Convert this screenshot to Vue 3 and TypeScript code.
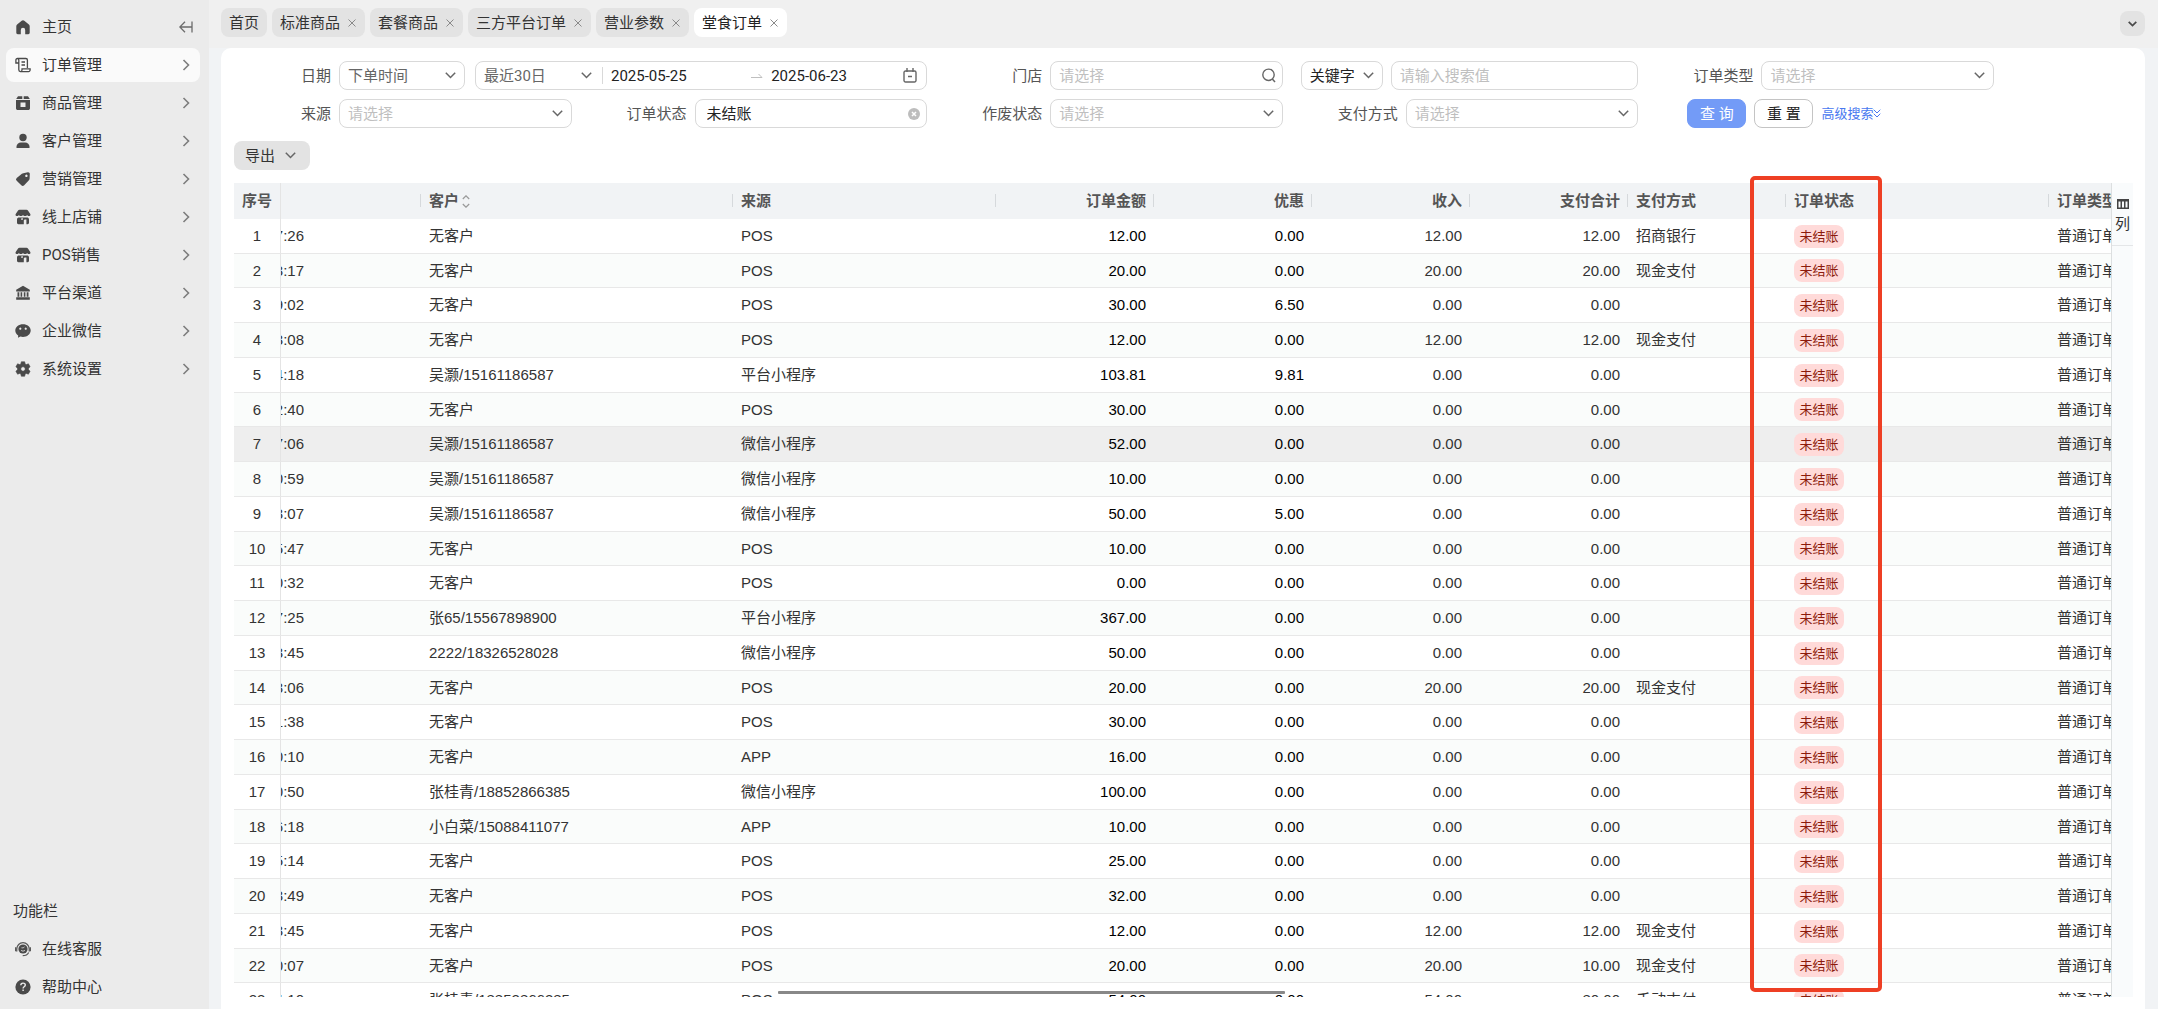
<script setup lang="ts">
import { ref } from 'vue'

interface MenuEntry {
  label: string
  icon: string
}

interface Order {
  no: number
  time: string
  customer: string
  source: string
  amount: string
  discount: string
  income: string
  paid: string
  method: string
}

const menu: MenuEntry[] = [
  { label: '订单管理', icon: 'order' },
  { label: '商品管理', icon: 'goods' },
  { label: '客户管理', icon: 'user' },
  { label: '营销管理', icon: 'tag' },
  { label: '线上店铺', icon: 'shop' },
  { label: 'POS销售', icon: 'shop' },
  { label: '平台渠道', icon: 'bank' },
  { label: '企业微信', icon: 'chat' },
  { label: '系统设置', icon: 'gear' },
]
const activeMenu = ref('订单管理')

const tabs = ref(['首页', '标准商品', '套餐商品', '三方平台订单', '营业参数', '堂食订单'])
const activeTab = ref('堂食订单')

const startDate = ref('2025-05-25')
const endDate = ref('2025-06-23')
const orderStatus = ref('未结账')
const keyword = ref('')

const none = '无客户'
const wu = '吴灏/15161186587'
const raw: string[][] = [
  ['7:26', none, 'POS', '12.00', '0.00', '12.00', '12.00', '招商银行'],
  ['3:17', none, 'POS', '20.00', '0.00', '20.00', '20.00', '现金支付'],
  ['9:02', none, 'POS', '30.00', '6.50', '0.00', '0.00', ''],
  ['3:08', none, 'POS', '12.00', '0.00', '12.00', '12.00', '现金支付'],
  ['4:18', wu, '平台小程序', '103.81', '9.81', '0.00', '0.00', ''],
  ['2:40', none, 'POS', '30.00', '0.00', '0.00', '0.00', ''],
  ['7:06', wu, '微信小程序', '52.00', '0.00', '0.00', '0.00', ''],
  ['0:59', wu, '微信小程序', '10.00', '0.00', '0.00', '0.00', ''],
  ['3:07', wu, '微信小程序', '50.00', '5.00', '0.00', '0.00', ''],
  ['5:47', none, 'POS', '10.00', '0.00', '0.00', '0.00', ''],
  ['0:32', none, 'POS', '0.00', '0.00', '0.00', '0.00', ''],
  ['7:25', '张65/15567898900', '平台小程序', '367.00', '0.00', '0.00', '0.00', ''],
  ['3:45', '2222/18326528028', '微信小程序', '50.00', '0.00', '0.00', '0.00', ''],
  ['3:06', none, 'POS', '20.00', '0.00', '20.00', '20.00', '现金支付'],
  ['1:38', none, 'POS', '30.00', '0.00', '0.00', '0.00', ''],
  ['0:10', none, 'APP', '16.00', '0.00', '0.00', '0.00', ''],
  ['0:50', '张桂青/18852866385', '微信小程序', '100.00', '0.00', '0.00', '0.00', ''],
  ['6:18', '小白菜/15088411077', 'APP', '10.00', '0.00', '0.00', '0.00', ''],
  ['5:14', none, 'POS', '25.00', '0.00', '0.00', '0.00', ''],
  ['3:49', none, 'POS', '32.00', '0.00', '0.00', '0.00', ''],
  ['3:45', none, 'POS', '12.00', '0.00', '12.00', '12.00', '现金支付'],
  ['0:07', none, 'POS', '20.00', '0.00', '20.00', '10.00', '现金支付'],
  ['4:10', '张桂青/18852866385', 'POS', '54.00', '0.00', '54.00', '80.00', '手动支付'],
]
const orders: Order[] = raw.map((r, i) => ({
  no: i + 1,
  time: r[0],
  customer: r[1],
  source: r[2],
  amount: r[3],
  discount: r[4],
  income: r[5],
  paid: r[6],
  method: r[7],
}))
const hoveredNo = 7

function closeTab(name: string): void {
  tabs.value = tabs.value.filter((t) => t !== name)
}
</script>

<template>
  <div class="app">
    <aside class="sidebar">
      <nav class="menu">
        <div class="item">
          <svg class="ico" viewBox="0 0 16 16"><path d="M8 1.200c.5 0 .9.200 1.300.5l4.600 3.800c.5.400.8 1 .8 1.700v6.600c0 .8-.6 1.400-1.400 1.400H10.200v-4.200a2.200 2.200 0 0 0-4.400 0v4.200H2.700c-.8 0-1.400-.6-1.400-1.400V7.200c0-.7.3-1.300.8-1.700l4.600-3.800c.4-.3.8-.5 1.300-.5z" fill="#4a4a4a" /></svg>
          <a href="#" class="name">主页</a>
          <button class="fold" type="button" aria-label="收起菜单">
            <svg width="14" height="12" viewBox="0 0 14 12"><path d="M13 0.500v11M12.500 6H1M6 0.800L.8 6 6 11.200" fill="none" stroke="#6b6b6b" stroke-width="1.300" /></svg>
          </button>
        </div>
        <a v-for="m in menu" :key="m.label" href="#" class="item" :class="{ active: m.label === activeMenu }" @click.prevent="activeMenu = m.label">
          <svg v-if="m.icon === 'order'" class="ico" viewBox="0 0 16 16"><path d="M3.500 6H.9V3.200a1.600 1.600 0 0 1 1.600-1.700h8.400a1.500 1.500 0 0 1 1.500 1.500v8M2.500 1.500c.8 0 1.300.7 1.300 1.700v9.600c0 1 .7 1.800 1.600 1.800h8.200a1.500 1.500 0 0 0 1.500-1.500v-1.300H7v1.300c0 1-.7 1.500-1.500 1.500M6.500 5h3.500M6.500 8h3.500" fill="none" stroke="#4a4a4a" stroke-width="1.300" /></svg>
          <svg v-else-if="m.icon === 'goods'" class="ico" viewBox="0 0 16 16"><path d="M3 1.200h4.300V4H1.200zM8.700 1.200H13L14.800 4H8.700z" fill="#4a4a4a" /><path fill-rule="evenodd" d="M1 5h14v8.200c0 1-.8 1.800-1.800 1.800H2.800c-1 0-1.800-.8-1.800-1.800zM5.500 7.500v4.500h5V7.500z" fill="#4a4a4a" /></svg>
          <svg v-else-if="m.icon === 'user'" class="ico" viewBox="0 0 16 16"><circle cx="8" cy="4.500" r="3.700" fill="#4a4a4a" /><path d="M1.500 15v-1.200c0-2.400 2-4.200 4.400-4.200h4.200c2.400 0 4.400 1.800 4.400 4.200V15z" fill="#4a4a4a" /></svg>
          <svg v-else-if="m.icon === 'tag'" class="ico" viewBox="0 0 16 16"><path fill-rule="evenodd" d="M8.300 2.200l4.600-.9c1-.2 1.900.6 1.900 1.500l-.2 5c0 .6-.3 1.100-.7 1.500l-4.700 4.900a2 2 0 0 1-2.900 0L1.700 9.800a2 2 0 0 1 0-2.900l5.200-4.200c.4-.3.9-.4 1.400-.5zM11.400 3.600a1.200 1.200 0 1 0 .01 0z" fill="#4a4a4a" /></svg>
          <svg v-else-if="m.icon === 'shop'" class="ico" viewBox="0 0 16 16"><path d="M4.500.8h7c.7 0 1.200.3 1.600.9l2.200 3.200c.3.5.3 1.800-.9 2.100-1 .3-1.900-.3-2.200-1-.4.7-1.200 1.100-2.100 1.100S8.400 6.700 8 6c-.4.700-1.200 1.100-2.100 1.100S4.200 6.700 3.800 6c-.3.700-1.200 1.300-2.200 1C.4 6.700.4 5.400.7 4.900l2.200-3.200c.4-.6.9-.9 1.600-.9z" fill="#4a4a4a" /><path fill-rule="evenodd" d="M2 10.500C2 9.100 3 8.500 4.100 8.500h7.800c1.100 0 2.100.6 2.100 2v3.300c0 .8-.6 1.400-1.400 1.400H3.400c-.8 0-1.400-.6-1.400-1.400zM9.600 10.500h1.800v4.700H8.800v-3.900zM6.700 9L6 10.700h2L7.500 9z" fill="#4a4a4a" /></svg>
          <svg v-else-if="m.icon === 'bank'" class="ico" viewBox="0 0 16 16"><path d="M8 .8l6.800 4v1.700H1.200V4.800zM2.500 7.200h1.800v4.600H2.500zM5.600 7.200h1.600v4.600H5.600zM8.800 7.200h1.600v4.600H8.800zM11.700 7.200h1.800v4.600h-1.800zM1.200 12.300h13.600v2.500H1.200z" fill="#4a4a4a" /></svg>
          <svg v-else-if="m.icon === 'chat'" class="ico" viewBox="0 0 16 16"><path fill-rule="evenodd" d="M8 1.200c4.200 0 7.700 2.700 7.700 6.300S12.200 14 8 14c-.9 0-1.800-.1-2.600-.4L3 14.800l.2-2.300C1.400 11.300.3 9.500.3 7.500.3 3.900 3.800 1.200 8 1.200zM5.300 4.600a1.100 1.100 0 1 0 .01 0zM10.700 4.600a1.100 1.100 0 1 0 .01 0z" fill="#4a4a4a" /></svg>
          <svg v-else class="ico" viewBox="0 0 16 16"><path fill-rule="evenodd" d="M6.300.8h3.400l.4 2.100 1.300.7 2-.8 1.700 3-1.600 1.400v1.600l1.600 1.400-1.700 3-2-.8-1.300.7-.4 2.100H6.300l-.4-2.100-1.300-.7-2 .8-1.700-3 1.600-1.400V7.200L.9 5.800l1.700-3 2 .8 1.300-.7zM8 5.800a2.200 2.200 0 1 0 .01 0z" fill="#4a4a4a" stroke="#4a4a4a" stroke-width=".6" stroke-linejoin="round" /></svg>
          <span class="name">{{ m.label }}</span>
          <svg class="arrow" width="8" height="12" viewBox="0 0 8 12"><path d="M1.500 1l5 5-5 5" fill="none" stroke="#7d7d7d" stroke-width="1.600" /></svg>
        </a>
      </nav>
      <div class="tools">
        <div class="tools-title">功能栏</div>
        <a href="#" class="item">
          <svg class="ico" viewBox="0 0 16 16"><path d="M1.800 10.500V8a6.200 6.400 0 0 1 12.400 0v2.500" fill="none" stroke="#5a5a5a" stroke-width="1.200" /><path d="M0 6.200h1.600v4H0zM14.400 6.200H16v4h-1.600z" fill="#5a5a5a" /><circle cx="8" cy="8" r="4.600" fill="#4a4a4a" /><path d="M6 9.200c1 1.200 3 1.200 4 0M6.500 6.800c1.200.2 2.300-.1 3-.9" fill="none" stroke="#ebebeb" stroke-width=".8" /><path d="M13.700 11.500c-1 2-2.900 3.200-6 3.200" fill="none" stroke="#5a5a5a" stroke-width="1.200" /></svg>
          <span class="name">在线客服</span>
        </a>
        <a href="#" class="item">
          <svg class="ico" viewBox="0 0 16 16"><circle cx="8" cy="8" r="7.600" fill="#4a4a4a" /><path d="M5.800 6.300c0-1.300 1-2.200 2.200-2.200s2.300.8 2.300 2c0 1.700-2.200 1.700-2.200 3.300M8.100 10.600v1.500" fill="none" stroke="#ebebeb" stroke-width="1.400" /></svg>
          <span class="name">帮助中心</span>
        </a>
      </div>
    </aside>

    <div class="main">
      <header class="tabs">
        <div v-for="t in tabs" :key="t" class="tab" :class="{ on: t === activeTab }">
          <button type="button" class="tab-name" @click="activeTab = t">{{ t }}</button>
          <button v-if="t !== '首页'" type="button" class="tab-x" :aria-label="'关闭' + t" @click="closeTab(t)">
            <svg width="8" height="8" viewBox="0 0 8 8"><path d="M.5.5l7 7M7.500.5l-7 7" stroke="#8a8a8a" fill="none" /></svg>
          </button>
        </div>
        <button type="button" class="more" aria-label="更多标签">
          <svg width="9" height="6" viewBox="0 0 9 6"><path d="M.7.8l3.800 3.800L8.300.8" fill="none" stroke="#4a4a4a" stroke-width="1.700" /></svg>
        </button>
      </header>

      <main class="panel">
        <form class="filters" @submit.prevent>
          <div class="field wide">
            <label for="f-date">日期</label>
            <div class="select datekind">
              <select id="f-date"><option>下单时间</option></select>
              <svg class="chev" viewBox="0 0 11 7"><path d="M.8.8l4.700 4.700L10.200.8" /></svg>
            </div>
            <div class="range">
              <div class="select plain">
                <select aria-label="日期区间"><option>最近30日</option></select>
                <svg class="chev" viewBox="0 0 11 7"><path d="M.8.8l4.700 4.700L10.200.8" /></svg>
              </div>
              <i class="bar"></i>
              <input v-model="startDate" aria-label="开始日期" />
              <svg class="to" width="12" height="6" viewBox="0 0 12 6"><path d="M0 4.500h11L7.500 1" fill="none" stroke="#bfbfbf" /></svg>
              <input v-model="endDate" class="end" aria-label="结束日期" />
              <svg class="cal" width="14" height="15" viewBox="0 0 14 15"><path d="M2.500 3h9a1.500 1.500 0 0 1 1.500 1.500v8a1.500 1.500 0 0 1-1.500 1.500h-9A1.500 1.500 0 0 1 1 12.500v-8A1.500 1.500 0 0 1 2.500 3zM4 0v4M10 0v4M5 8.500h4" fill="none" stroke="#666" stroke-width="1.400" /></svg>
            </div>
          </div>

          <div class="field">
            <label for="f-store">门店</label>
            <div class="box">
              <input id="f-store" placeholder="请选择" />
              <svg class="search" width="14" height="15" viewBox="0 0 14 15"><circle cx="6.500" cy="6.800" r="5.700" fill="none" stroke="#666" stroke-width="1.400" /><path d="M10.300 11l2.700 3" stroke="#666" stroke-width="1.500" /></svg>
            </div>
          </div>

          <div class="field">
            <div class="select keykind">
              <select aria-label="搜索字段"><option>关键字</option></select>
              <svg class="chev" viewBox="0 0 11 7"><path d="M.8.8l4.700 4.700L10.200.8" /></svg>
            </div>
            <div class="box key">
              <input v-model="keyword" placeholder="请输入搜索值" aria-label="搜索值" />
            </div>
          </div>

          <div class="field">
            <label for="f-type">订单类型</label>
            <div class="select empty">
              <select id="f-type"><option>请选择</option></select>
              <svg class="chev" viewBox="0 0 11 7"><path d="M.8.8l4.700 4.700L10.200.8" /></svg>
            </div>
          </div>

          <div class="field">
            <label for="f-source">来源</label>
            <div class="select empty">
              <select id="f-source"><option>请选择</option></select>
              <svg class="chev" viewBox="0 0 11 7"><path d="M.8.8l4.700 4.700L10.200.8" /></svg>
            </div>
          </div>

          <div class="field">
            <label for="f-status">订单状态</label>
            <div class="box status">
              <input id="f-status" v-model="orderStatus" />
              <button type="button" class="clear" aria-label="清除" @click="orderStatus = ''">
                <svg width="12" height="12" viewBox="0 0 12 12"><circle cx="6" cy="6" r="6" fill="#bdbdbd" /><path d="M4 4l4 4M8 4L4 8" stroke="#fff" stroke-width="1.500" /></svg>
              </button>
            </div>
          </div>

          <div class="field">
            <label for="f-void">作废状态</label>
            <div class="select empty">
              <select id="f-void"><option>请选择</option></select>
              <svg class="chev" viewBox="0 0 11 7"><path d="M.8.8l4.700 4.700L10.200.8" /></svg>
            </div>
          </div>

          <div class="field">
            <label for="f-pay">支付方式</label>
            <div class="select empty">
              <select id="f-pay"><option>请选择</option></select>
              <svg class="chev" viewBox="0 0 11 7"><path d="M.8.8l4.700 4.700L10.200.8" /></svg>
            </div>
          </div>

          <div class="field actions">
            <button type="submit" class="btn primary">查 询</button>
            <button type="reset" class="btn">重 置</button>
            <a href="#" class="advanced">高级搜索<svg width="8" height="9" viewBox="0 0 8 9"><path d="M.7.700L4 4 7.300.7M.7 4.700L4 8l3.300-3.300" fill="none" stroke="#4878f0" /></svg></a>
          </div>
        </form>

        <div class="toolbar">
          <button type="button" class="export">导出
            <svg width="11" height="7" viewBox="0 0 11 7"><path d="M.8.8l4.700 4.700L10.200.8" fill="none" stroke="#666" stroke-width="1.500" /></svg>
          </button>
        </div>

        <div class="grid">
          <div class="scroller">
            <table>
              <colgroup>
                <col class="w-no" /><col class="w-time" /><col class="w-cust" /><col class="w-src" />
                <col class="w-num" /><col class="w-num" /><col class="w-num" /><col class="w-num" /><col class="w-num" />
                <col class="w-src" /><col />
              </colgroup>
              <thead>
                <tr>
                  <th class="no">序号</th>
                  <th></th>
                  <th><span class="sortable">客户<svg width="8" height="13" viewBox="0 0 8 13"><path d="M.8 4L4 .8 7.200 4M.8 9L4 12.200 7.200 9" fill="none" stroke="#999" stroke-width="1.200" /></svg></span></th>
                  <th>来源</th>
                  <th class="num">订单金额</th>
                  <th class="num">优惠</th>
                  <th class="num">收入</th>
                  <th class="num">支付合计</th>
                  <th>支付方式</th>
                  <th>订单状态</th>
                  <th>订单类型</th>
                </tr>
              </thead>
              <tbody>
                <tr v-for="o in orders" :key="o.no" :class="{ hover: o.no === hoveredNo }">
                  <td class="no">{{ o.no }}</td>
                  <td class="time"><div>{{ o.time }}</div></td>
                  <td>{{ o.customer }}</td>
                  <td>{{ o.source }}</td>
                  <td class="num dark">{{ o.amount }}</td>
                  <td class="num dark">{{ o.discount }}</td>
                  <td class="num">{{ o.income }}</td>
                  <td class="num">{{ o.paid }}</td>
                  <td>{{ o.method }}</td>
                  <td><span class="pill">未结账</span></td>
                  <td>普通订单</td>
                </tr>
              </tbody>
            </table>
            <div class="thumb"></div>
          </div>
          <div class="side">
            <button type="button" class="cols">
              <svg width="12" height="10" viewBox="0 0 12 10"><path d="M0 0h12v10H0zM1.500 2.500v6h2v-6zM5 2.500v6h2v-6zM8.500 2.500v6h2v-6z" fill="#444" fill-rule="evenodd" /></svg>
              列
            </button>
          </div>
          <div class="marker"></div>
        </div>
      </main>
    </div>
  </div>
</template>

<style>
body {
  background: #f0f0f0;
}
</style>

<style scoped>
.app {
  display: flex;
  height: 100vh;
  overflow: hidden;
  font: 15px/20px Roboto, "Noto Sans CJK SC", sans-serif;
  color: #333;
}
.app *,
.app *::after {
  box-sizing: border-box;
}
button,
input,
select {
  font: inherit;
  color: inherit;
  border: 0;
  background: none;
  padding: 0;
  margin: 0;
  outline: 0;
}
a {
  color: inherit;
  text-decoration: none;
}
svg {
  display: block;
  flex: none;
}

.sidebar {
  width: 209px;
  flex: none;
  background: #ebebeb;
  display: flex;
  flex-direction: column;
  justify-content: space-between;
  padding: 10px 9px 5px 6px;
}
.menu,
.tools {
  display: flex;
  flex-direction: column;
  gap: 4px;
}
.item {
  display: flex;
  align-items: center;
  height: 34px;
  padding: 0 10px 0 9px;
  border-radius: 8px;
}
.item.active {
  background: #fafafa;
}
.ico {
  width: 16px;
  height: 16px;
  margin-right: 11px;
}
.name {
  flex: 1;
}
.fold {
  margin-right: -3px;
}
.tools-title {
  height: 34px;
  line-height: 34px;
  padding-left: 7px;
}

.main {
  flex: 1;
  min-width: 0;
  display: flex;
  flex-direction: column;
  padding: 0 13px 0 12px;
  background: linear-gradient(#f0f0f0 48px, #f1f3f5 48px);
}
.tabs {
  height: 48px;
  flex: none;
  display: flex;
  gap: 5px;
  padding-top: 8px;
}
.tab {
  display: flex;
  align-items: center;
  height: 29px;
  padding: 0 8px;
  gap: 7px;
  border-radius: 8px;
  background: #e3e3e3;
}
.tab.on {
  background: #fff;
  color: #222;
}
.tab-x {
  width: 10px;
  display: flex;
  justify-content: center;
}
.more {
  width: 25px;
  height: 25px;
  margin: 3px 0 0 auto;
  border-radius: 8px;
  background: #e3e3e3;
  display: flex;
  align-items: center;
  justify-content: center;
}

.panel {
  flex: 1;
  min-height: 0;
  display: flex;
  flex-direction: column;
  background: #fff;
  border-radius: 10px 10px 0 0;
  padding: 13px 12px 12px 13px;
}
.filters {
  display: grid;
  grid-template-columns: repeat(5, minmax(0, 1fr));
  gap: 9px 18px;
  padding-right: 139px;
}
.field {
  display: flex;
  align-items: center;
  min-width: 0;
}
.field.wide {
  grid-column: span 2;
}
label {
  width: 97px;
  margin-right: 8px;
  text-align: right;
  color: #555;
  flex: none;
}
.select,
.box,
.range {
  flex: 1;
  min-width: 0;
  height: 29px;
  border: 1px solid #d9d9d9;
  border-radius: 8px;
  display: flex;
  align-items: center;
  position: relative;
  color: #666;
}
.select select {
  appearance: none;
  width: 100%;
  height: 27px;
  padding: 0 24px 0 8px;
}
.select.empty {
  color: #bfbfbf;
}
.chev {
  position: absolute;
  right: 8px;
  width: 11px;
  height: 7px;
  pointer-events: none;
  fill: none;
  stroke: #666;
  stroke-width: 1.5px;
}
.datekind {
  flex: 0 0 126px;
  margin-right: 10px;
}
.range .plain {
  flex: 0 0 124px;
  border: 0;
}
.bar {
  width: 1px;
  height: 17px;
  margin: 0 8px 0 2px;
  background: #d9d9d9;
}
.range input {
  flex: 1;
  min-width: 0;
  color: #222;
}
.range .end {
  flex: 0 0 132px;
}
.to {
  margin-right: 8px;
}
.cal {
  margin-right: 9px;
}
.box {
  padding: 0 6px 0 8px;
}
.box input {
  flex: 1;
  min-width: 0;
}
.box input::placeholder {
  color: #bfbfbf;
  opacity: 1;
}
.box.status {
  padding-left: 11px;
  color: #222;
}
.select.keykind {
  flex: 0 0 82px;
  margin-right: 8px;
  color: #222;
}
.actions {
  padding-left: 31px;
}
.btn {
  width: 59px;
  height: 29px;
  flex: none;
  margin-right: 8px;
  border: 1px solid #c4c4c4;
  border-radius: 8px;
  color: #222;
  white-space: pre;
}
.btn.primary {
  border-color: #739bf7;
  background: #739bf7;
  color: #fff;
}
.advanced {
  display: flex;
  align-items: center;
  font-size: 13px;
  color: #4878f0;
  white-space: nowrap;
}
.toolbar {
  padding: 13px 0;
}
.export {
  display: flex;
  align-items: center;
  gap: 10px;
  height: 29px;
  padding: 0 14px 0 11px;
  border-radius: 8px;
  background: #e3e3e3;
}

.grid {
  flex: 1;
  min-height: 0;
  display: flex;
  position: relative;
}
.scroller {
  flex: 1;
  min-width: 0;
  overflow: hidden;
  position: relative;
}
table {
  table-layout: fixed;
  width: 100%;
  border-collapse: separate;
  border-spacing: 0;
  font-family: "Liberation Sans", "Noto Sans CJK SC", sans-serif;
}
.w-no { width: 47px; }
.w-time { width: 140px; }
.w-cust { width: 312px; }
.w-src { width: 263px; }
.w-num { width: 158px; }
th,
td {
  padding: 0 8px;
  text-align: left;
  white-space: nowrap;
  overflow: hidden;
}
th {
  height: 36px;
  background: #f1f3f5;
  color: #555;
  font-weight: 700;
  position: relative;
}
th:not(:first-child):not(:last-child)::after {
  content: "";
  position: absolute;
  right: 0;
  top: 11px;
  width: 1px;
  height: 13px;
  background: #d6d9dc;
}
.sortable {
  display: flex;
  align-items: center;
  gap: 3px;
}
td {
  height: 35px;
  border-bottom: 1px solid #e8e8e8;
}
tr:nth-child(4n + 2) td {
  height: 34px;
}
tbody tr:nth-child(even) td {
  background: #fafcfb;
}
tbody tr.hover td {
  background: #eee;
}
.no {
  padding: 0;
  text-align: center;
  border-right: 1px solid #e4e4e4;
}
.num {
  text-align: right;
}
.dark {
  color: #000;
}
.time {
  padding: 0;
}
.time div {
  width: 23px;
  overflow: hidden;
  display: flex;
  justify-content: flex-end;
}
.pill {
  display: block;
  width: 50px;
  height: 23px;
  border-radius: 8px;
  background: #ffdad9;
  color: #8c1a0b;
  font-size: 13px;
  line-height: 23px;
  text-align: center;
}
.thumb {
  position: absolute;
  left: 29%;
  bottom: 3px;
  width: 27%;
  height: 3px;
  border-radius: 1px;
  background: #888;
}
.side {
  width: 22px;
  flex: none;
  background: #f9fbfc;
  border-left: 1px solid #dcdfe0;
}
.cols {
  display: flex;
  flex-direction: column;
  align-items: center;
  gap: 5px;
  width: 100%;
  height: 63px;
  padding-top: 16px;
  border-bottom: 1px solid #e4e6e8;
}
.marker {
  position: absolute;
  top: -7px;
  bottom: 5px;
  right: 251px;
  width: 132px;
  border: 4px solid #ee3f24;
  border-radius: 5px;
  pointer-events: none;
}
</style>
